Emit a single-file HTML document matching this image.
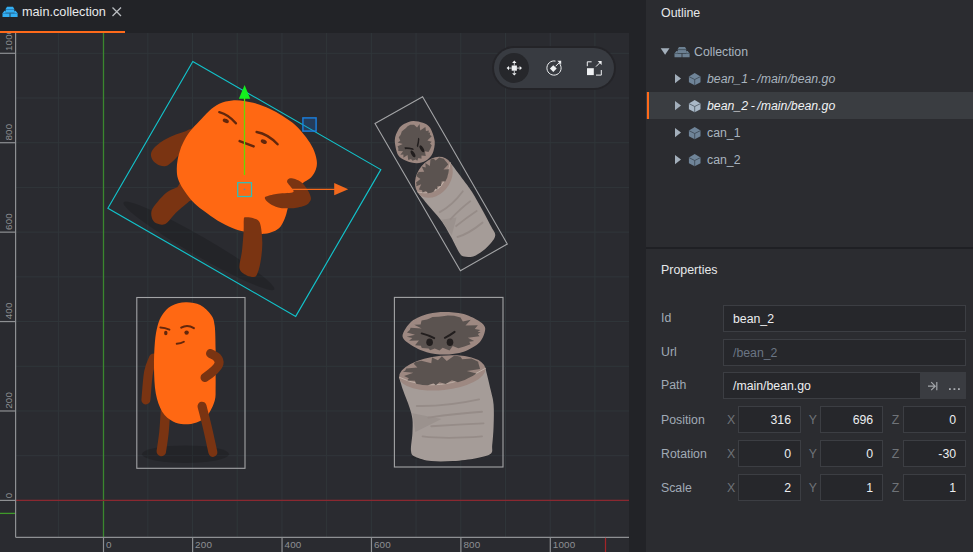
<!DOCTYPE html>
<html><head><meta charset="utf-8">
<style>
*{box-sizing:border-box;margin:0;padding:0}
html,body{width:973px;height:552px;overflow:hidden;background:#2b2c30;font-family:"Liberation Sans",sans-serif;}
.abs{position:absolute;white-space:nowrap}
#tabbar{left:0;top:0;width:646px;height:33px;background:#222327}
#strip{left:629px;top:0;width:17px;height:552px;background:#222327}
#tabline{left:0;top:31px;width:125px;height:2px;background:#ff6a1a}
.tabtxt{left:22px;top:4px;font-size:12.7px;color:#e8eaec;line-height:16px}
#panel{left:646px;top:0;width:327px;height:552px;background:#2b2c30}
#divider{left:646px;top:247px;width:327px;height:2px;background:#1f2024}
#sel{left:646px;top:92px;width:327px;height:27px;background:#3a3d41}
#selmark{left:647px;top:92px;width:2px;height:27px;background:#ff6a1a}
.h{font-size:12.4px;color:#e6e8ea;line-height:16px}
.row{font-size:12.3px;color:#a9b4bf;line-height:16px}
.it{font-style:italic;word-spacing:-0.8px}
.lbl{font-size:12.3px;color:#a0aab5;line-height:16px}
.fld{background:#26272b;border:1px solid #3c3e43}
.val{font-size:12.3px;color:#eceef0;line-height:16px}
.xyz{font-size:12.3px;color:#6f7378;line-height:16px}
.num{text-align:right;width:62.5px}
</style></head><body>
<div id="tabbar" class="abs"></div>
<div id="strip" class="abs"></div>
<div id="tabline" class="abs"></div>
<svg class="abs" style="left:0;top:0" width="22" height="22" viewBox="0 0 22 22">
  <path d="M7 6.8 L13 6.8 L14.2 8.8 L14.2 12.8 L5.8 12.8 L5.8 8.8 Z" fill="#33aef2"/>
  <rect x="5.8" y="9.1" width="8.4" height="0.8" fill="#2277b0"/>
  <path d="M4.4 10.8 L5.8 10.8 L5.8 13.2 L9.6 13.2 L9.6 17 L2.5 17 L2.5 13.3 Z" fill="#33aef2"/>
  <path d="M15.6 10.8 L14.2 10.8 L14.2 13.2 L10.4 13.2 L10.4 17 L17.6 17 L17.6 13.3 Z" fill="#33aef2"/>
  <rect x="2.5" y="13.1" width="15.1" height="0.6" fill="#2277b0"/>
</svg>
<div class="abs tabtxt">main.collection</div>
<svg class="abs" style="left:111px;top:6px" width="12" height="12" viewBox="0 0 12 12">
  <path d="M1.5 1.5 L10 10 M10 1.5 L1.5 10" stroke="#b9bcc0" stroke-width="1.3"/>
</svg>

<svg class="abs" style="left:0;top:0" width="629" height="552" viewBox="0 0 629 552"><defs><clipPath id="cc"><rect x="0" y="33" width="629" height="519"/></clipPath></defs><g clip-path="url(#cc)">
<rect x="0" y="33" width="629" height="519" fill="#2a2b30"/>
<line x1="58.39" y1="33" x2="58.39" y2="537.3" stroke="#30363a" stroke-width="1"/>
<line x1="103.50" y1="33" x2="103.50" y2="537.3" stroke="#30363a" stroke-width="1"/>
<line x1="147.81" y1="33" x2="147.81" y2="537.3" stroke="#30363a" stroke-width="1"/>
<line x1="192.52" y1="33" x2="192.52" y2="537.3" stroke="#30363a" stroke-width="1"/>
<line x1="237.23" y1="33" x2="237.23" y2="537.3" stroke="#30363a" stroke-width="1"/>
<line x1="281.94" y1="33" x2="281.94" y2="537.3" stroke="#30363a" stroke-width="1"/>
<line x1="326.65" y1="33" x2="326.65" y2="537.3" stroke="#30363a" stroke-width="1"/>
<line x1="371.36" y1="33" x2="371.36" y2="537.3" stroke="#30363a" stroke-width="1"/>
<line x1="416.07" y1="33" x2="416.07" y2="537.3" stroke="#30363a" stroke-width="1"/>
<line x1="460.78" y1="33" x2="460.78" y2="537.3" stroke="#30363a" stroke-width="1"/>
<line x1="505.49" y1="33" x2="505.49" y2="537.3" stroke="#30363a" stroke-width="1"/>
<line x1="550.20" y1="33" x2="550.20" y2="537.3" stroke="#30363a" stroke-width="1"/>
<line x1="594.91" y1="33" x2="594.91" y2="537.3" stroke="#30363a" stroke-width="1"/>
<line x1="15.6" y1="500.40" x2="629" y2="500.40" stroke="#30363a" stroke-width="1"/>
<line x1="15.6" y1="455.69" x2="629" y2="455.69" stroke="#30363a" stroke-width="1"/>
<line x1="15.6" y1="410.98" x2="629" y2="410.98" stroke="#30363a" stroke-width="1"/>
<line x1="15.6" y1="366.27" x2="629" y2="366.27" stroke="#30363a" stroke-width="1"/>
<line x1="15.6" y1="321.56" x2="629" y2="321.56" stroke="#30363a" stroke-width="1"/>
<line x1="15.6" y1="276.85" x2="629" y2="276.85" stroke="#30363a" stroke-width="1"/>
<line x1="15.6" y1="232.14" x2="629" y2="232.14" stroke="#30363a" stroke-width="1"/>
<line x1="15.6" y1="187.43" x2="629" y2="187.43" stroke="#30363a" stroke-width="1"/>
<line x1="15.6" y1="142.72" x2="629" y2="142.72" stroke="#30363a" stroke-width="1"/>
<line x1="15.6" y1="98.01" x2="629" y2="98.01" stroke="#30363a" stroke-width="1"/>
<line x1="15.6" y1="53.30" x2="629" y2="53.30" stroke="#30363a" stroke-width="1"/>
<line x1="103.5" y1="33" x2="103.5" y2="537.3" stroke="#3a872e" stroke-width="1.3"/>
<line x1="15.6" y1="500.4" x2="629" y2="500.4" stroke="#8a2830" stroke-width="1.25"/>
<line x1="15.6" y1="33" x2="15.6" y2="537.3" stroke="#8e9093" stroke-width="1.2"/>
<line x1="15.6" y1="537.3" x2="629" y2="537.3" stroke="#8e9093" stroke-width="1.2"/>
<line x1="0" y1="513.4" x2="15" y2="513.4" stroke="#3f9a2a" stroke-width="1.3"/>
<line x1="605.5" y1="537.8" x2="605.5" y2="552" stroke="#a22528" stroke-width="1.25"/>
<line x1="103.50" y1="537.3" x2="103.50" y2="552" stroke="#8e9093" stroke-width="1.2"/>
<text x="106.00" y="548.3" font-family="Liberation Sans" font-size="9.9" letter-spacing="0.15" fill="#8e9093">0</text>
<line x1="0" y1="500.40" x2="15.6" y2="500.40" stroke="#8e9093" stroke-width="1.2"/>
<text transform="translate(11.8 498.20) rotate(-90)" x="0" y="0" font-family="Liberation Sans" font-size="9.9" letter-spacing="0.15" fill="#8e9093">0</text>
<line x1="192.62" y1="537.3" x2="192.62" y2="552" stroke="#8e9093" stroke-width="1.2"/>
<text x="195.12" y="548.3" font-family="Liberation Sans" font-size="9.9" letter-spacing="0.15" fill="#8e9093">200</text>
<line x1="0" y1="410.98" x2="15.6" y2="410.98" stroke="#8e9093" stroke-width="1.2"/>
<text transform="translate(11.8 408.78) rotate(-90)" x="0" y="0" font-family="Liberation Sans" font-size="9.9" letter-spacing="0.15" fill="#8e9093">200</text>
<line x1="282.04" y1="537.3" x2="282.04" y2="552" stroke="#8e9093" stroke-width="1.2"/>
<text x="284.54" y="548.3" font-family="Liberation Sans" font-size="9.9" letter-spacing="0.15" fill="#8e9093">400</text>
<line x1="0" y1="321.56" x2="15.6" y2="321.56" stroke="#8e9093" stroke-width="1.2"/>
<text transform="translate(11.8 319.36) rotate(-90)" x="0" y="0" font-family="Liberation Sans" font-size="9.9" letter-spacing="0.15" fill="#8e9093">400</text>
<line x1="371.46" y1="537.3" x2="371.46" y2="552" stroke="#8e9093" stroke-width="1.2"/>
<text x="373.96" y="548.3" font-family="Liberation Sans" font-size="9.9" letter-spacing="0.15" fill="#8e9093">600</text>
<line x1="0" y1="232.14" x2="15.6" y2="232.14" stroke="#8e9093" stroke-width="1.2"/>
<text transform="translate(11.8 229.94) rotate(-90)" x="0" y="0" font-family="Liberation Sans" font-size="9.9" letter-spacing="0.15" fill="#8e9093">600</text>
<line x1="460.88" y1="537.3" x2="460.88" y2="552" stroke="#8e9093" stroke-width="1.2"/>
<text x="463.38" y="548.3" font-family="Liberation Sans" font-size="9.9" letter-spacing="0.15" fill="#8e9093">800</text>
<line x1="0" y1="142.72" x2="15.6" y2="142.72" stroke="#8e9093" stroke-width="1.2"/>
<text transform="translate(11.8 140.52) rotate(-90)" x="0" y="0" font-family="Liberation Sans" font-size="9.9" letter-spacing="0.15" fill="#8e9093">800</text>
<line x1="550.30" y1="537.3" x2="550.30" y2="552" stroke="#8e9093" stroke-width="1.2"/>
<text x="552.80" y="548.3" font-family="Liberation Sans" font-size="9.9" letter-spacing="0.15" fill="#8e9093">1000</text>
<line x1="0" y1="53.30" x2="15.6" y2="53.30" stroke="#8e9093" stroke-width="1.2"/>
<text transform="translate(11.8 51.10) rotate(-90)" x="0" y="0" font-family="Liberation Sans" font-size="9.9" letter-spacing="0.15" fill="#8e9093">1000</text>
<ellipse cx="185.5" cy="454.2" rx="43.5" ry="8.8" fill="#000" fill-opacity="0.16"/>
<path d="M153.50 358.00 C152.68 360.33 149.87 365.02 148.60 372.00 C147.33 378.98 146.35 395.25 145.90 399.90" stroke="#7a3412" stroke-width="9" fill="none" stroke-linecap="round"/>
<path d="M165.50 410.00 C165.25 413.67 164.70 425.08 164.00 432.00 C163.30 438.92 161.75 448.25 161.30 451.50" stroke="#7a3412" stroke-width="9.5" fill="none" stroke-linecap="round"/>
<path d="M185.70 302.20 C190.53 302.05 195.97 302.88 200.20 305.00 C204.43 307.12 208.68 311.43 211.10 314.90 C213.52 318.37 213.95 320.07 214.70 325.80 C215.45 331.53 215.45 341.93 215.60 349.30 C215.75 356.67 215.60 363.53 215.60 370.00 C215.60 376.47 215.75 382.97 215.60 388.10 C215.45 393.23 216.05 396.27 214.70 400.80 C213.35 405.33 210.52 411.68 207.50 415.30 C204.48 418.92 200.53 421.00 196.60 422.50 C192.67 424.00 187.83 424.45 183.90 424.30 C179.97 424.15 176.62 423.70 173.00 421.60 C169.38 419.50 165.07 416.37 162.20 411.70 C159.33 407.03 157.17 400.97 155.80 393.60 C154.43 386.23 154.15 376.08 154.00 367.50 C153.85 358.92 154.30 349.05 154.90 342.10 C155.50 335.15 156.38 330.33 157.60 325.80 C158.82 321.27 159.93 318.22 162.20 314.90 C164.47 311.58 167.28 308.02 171.20 305.90 C175.12 303.78 180.87 302.35 185.70 302.20Z" fill="#ff6813"/>
<path d="M202.00 406.20 C202.92 409.83 205.68 420.30 207.50 428.00 C209.32 435.70 212.00 448.33 212.90 452.40" stroke="#7a3412" stroke-width="9" fill="none" stroke-linecap="round"/>
<path d="M210.50 353.50 C211.58 354.17 215.58 355.83 217.00 357.50 C218.42 359.17 219.50 361.33 219.00 363.50 C218.50 365.67 216.33 368.17 214.00 370.50 C211.67 372.83 206.50 376.33 205.00 377.50" stroke="#7a3412" stroke-width="9" fill="none" stroke-linecap="round" stroke-linejoin="round"/>
<path d="M160.4 327.4 Q165 327.6 169.4 329.6" stroke="#63270c" stroke-width="2" fill="none" stroke-linecap="round"/>
<ellipse cx="165.8" cy="333" rx="1.7" ry="2.2" fill="#63270c"/>
<path d="M181.2 327.6 Q187.5 324 193.9 328.2" stroke="#63270c" stroke-width="2" fill="none" stroke-linecap="round"/>
<ellipse cx="186.6" cy="332.6" rx="2.2" ry="2.2" fill="#63270c"/>
<path d="M176.7 343.8 Q181 343.6 183.9 341.8" stroke="#63270c" stroke-width="1.9" fill="none" stroke-linecap="round"/>
<rect x="136.8" y="297.5" width="108.2" height="170.8" fill="none" stroke="#a3a4a6" stroke-width="1.1"/>
<ellipse cx="0" cy="0" rx="43.5" ry="9.6" fill="#000" fill-opacity="0.16" transform="translate(198.9 245.9) rotate(30) scale(2 1)"/>
<path d="M196.00 128.50 C194.33 126.25 186.33 131.08 182.00 132.50 C177.67 133.92 173.83 135.17 170.00 137.00 C166.17 138.83 161.92 141.33 159.00 143.50 C156.08 145.67 153.83 147.92 152.50 150.00 C151.17 152.08 150.72 154.00 151.00 156.00 C151.28 158.00 152.70 160.42 154.20 162.00 C155.70 163.58 158.03 164.83 160.00 165.50 C161.97 166.17 164.00 166.58 166.00 166.00 C168.00 165.42 169.83 163.83 172.00 162.00 C174.17 160.17 176.67 157.17 179.00 155.00 C181.33 152.83 183.83 150.50 186.00 149.00 C188.17 147.50 190.33 149.42 192.00 146.00 C193.67 142.58 197.67 130.75 196.00 128.50Z" fill="#7a3412"/>
<path d="M182.00 182.00 C179.50 180.22 179.45 185.62 177.00 187.30 C174.55 188.98 170.55 189.67 167.30 192.10 C164.05 194.53 160.13 198.75 157.50 201.90 C154.87 205.05 152.32 208.02 151.50 211.00 C150.68 213.98 151.68 217.70 152.60 219.80 C153.52 221.90 155.37 222.78 157.00 223.60 C158.63 224.42 160.68 224.88 162.40 224.70 C164.12 224.52 164.87 224.67 167.30 222.50 C169.73 220.33 173.48 215.13 177.00 211.70 C180.52 208.27 185.90 204.18 188.40 201.90 C190.90 199.62 193.07 201.32 192.00 198.00 C190.93 194.68 184.50 183.78 182.00 182.00Z" fill="#7a3412"/>
<path d="M232.30 100.50 C236.62 100.08 241.15 100.67 245.20 101.20 C249.25 101.73 252.53 102.43 256.60 103.70 C260.67 104.97 265.25 106.75 269.60 108.80 C273.95 110.85 278.35 113.23 282.70 116.00 C287.05 118.77 291.83 121.90 295.70 125.40 C299.57 128.90 303.00 133.13 305.90 137.00 C308.80 140.87 311.30 144.73 313.10 148.60 C314.90 152.47 316.22 156.80 316.70 160.20 C317.18 163.60 316.95 166.12 316.00 169.00 C315.05 171.88 313.28 175.08 311.00 177.50 C308.72 179.92 305.13 180.75 302.30 183.50 C299.47 186.25 296.30 190.25 294.00 194.00 C291.70 197.75 289.92 202.25 288.50 206.00 C287.08 209.75 286.82 213.08 285.50 216.50 C284.18 219.92 282.63 223.98 280.60 226.50 C278.57 229.02 275.97 230.38 273.30 231.60 C270.63 232.82 268.15 233.53 264.60 233.80 C261.05 234.07 255.45 233.57 252.00 233.20 C248.55 232.83 247.18 232.47 243.90 231.60 C240.62 230.73 236.65 229.82 232.30 228.00 C227.95 226.18 222.63 223.60 217.80 220.70 C212.97 217.80 207.65 213.98 203.30 210.60 C198.95 207.22 195.08 204.03 191.70 200.40 C188.32 196.77 185.28 192.42 183.00 188.80 C180.72 185.18 179.03 181.83 178.00 178.70 C176.97 175.57 176.87 173.12 176.80 170.00 C176.73 166.88 176.98 163.50 177.60 160.00 C178.22 156.50 179.35 152.33 180.50 149.00 C181.65 145.67 182.87 143.00 184.50 140.00 C186.13 137.00 187.88 134.08 190.30 131.00 C192.72 127.92 195.87 124.85 199.00 121.50 C202.13 118.15 205.72 113.87 209.10 110.90 C212.48 107.93 215.43 105.43 219.30 103.70 C223.17 101.97 227.98 100.92 232.30 100.50Z" fill="#ff6813"/>
<path d="M245.20 217.30 C246.80 217.00 250.95 217.25 253.40 218.20 C255.85 219.15 258.42 218.93 259.90 223.00 C261.38 227.07 262.20 236.10 262.30 242.60 C262.40 249.10 261.45 256.57 260.50 262.00 C259.55 267.43 258.07 272.72 256.60 275.20 C255.13 277.68 253.60 277.00 251.70 276.90 C249.80 276.80 247.23 276.10 245.20 274.60 C243.17 273.10 240.03 271.87 239.50 267.90 C238.97 263.93 241.32 256.92 242.00 250.80 C242.68 244.68 243.30 236.33 243.60 231.20 C243.90 226.07 243.53 222.32 243.80 220.00 C244.07 217.68 243.60 217.60 245.20 217.30Z" fill="#7a3412"/>
<path d="M265.40 196.80 C266.75 195.91 272.63 194.47 276.20 193.90 C279.77 193.33 289.97 193.07 292.20 192.50 C294.43 191.93 293.58 191.00 292.90 189.60 C292.22 188.20 287.58 183.48 287.10 182.00 C286.62 180.52 288.23 178.90 289.30 178.50 C290.37 178.10 293.37 178.40 295.10 179.00 C296.83 179.60 300.51 181.33 302.30 183.00 C304.09 184.67 307.34 189.37 308.50 191.50 C309.66 193.63 311.24 197.23 311.00 199.00 C310.76 200.77 308.82 203.60 306.70 204.80 C304.58 206.00 298.58 207.57 295.10 208.00 C291.62 208.43 283.69 208.40 280.60 208.00 C277.51 207.60 273.83 205.99 271.90 205.00 C269.97 204.01 266.97 201.69 266.10 200.60 C265.23 199.51 264.05 197.69 265.40 196.80Z" fill="#7a3412"/>
<path d="M219.3 112.1 Q228.5 114.5 235.9 123.3" stroke="#63270c" stroke-width="2.4" fill="none" stroke-linecap="round"/>
<ellipse cx="0" cy="0" rx="3.2" ry="2" fill="#63270c" transform="translate(225.8 120.8) rotate(25)"/>
<path d="M256.6 132 Q268 134 277.6 144.3" stroke="#63270c" stroke-width="2.4" fill="none" stroke-linecap="round"/>
<ellipse cx="0" cy="0" rx="3.2" ry="2" fill="#63270c" transform="translate(263.8 141.6) rotate(25)"/>
<path d="M239.6 141.1 L253.7 146.4" stroke="#63270c" stroke-width="2.4" fill="none" stroke-linecap="round"/>
<g transform="translate(448.7 382.2)"><path d="M-37 74 Q2 84 42 71" stroke="#1f2023" stroke-width="3" fill="none" opacity="0.35"/>
<path d="M-49.60 -5.00 C-48.95 -2.87 -47.43 2.77 -45.70 7.80 C-43.97 12.83 -40.77 20.37 -39.20 25.20 C-37.63 30.03 -36.78 32.45 -36.30 36.80 C-35.82 41.15 -36.07 45.98 -36.30 51.30 C-36.53 56.62 -38.18 64.83 -37.70 68.70 C-37.22 72.57 -36.78 72.80 -33.40 74.50 C-30.02 76.20 -23.68 78.17 -17.40 78.90 C-11.12 79.63 -3.18 79.38 4.30 78.90 C11.78 78.42 21.22 77.22 27.50 76.00 C33.78 74.78 39.33 73.78 42.00 71.60 C44.67 69.42 43.02 67.48 43.50 62.90 C43.98 58.32 44.67 50.87 44.90 44.10 C45.13 37.33 45.38 28.35 44.90 22.30 C44.42 16.25 43.37 13.88 42.00 7.80 C40.63 1.72 37.58 -10.53 36.70 -14.20 Z" fill="#a59c98"/>
<path d="M-36.3 31 L-7.3 36.8 L-33.4 49.9 Z" fill="#9b928e"/>
<path d="M-31.9 23.8 Q-2.9 24.5 30.4 17.2" stroke="#968c88" stroke-width="1.9" fill="none" stroke-linecap="round"/>
<path d="M-20.3 35.4 Q10 31 33.3 29.6" stroke="#968c88" stroke-width="1.9" fill="none" stroke-linecap="round"/>
<path d="M-17.4 44.1 Q10 42 34.8 41.2" stroke="#968c88" stroke-width="1.9" fill="none" stroke-linecap="round"/>
<path d="M-26.1 54.2 Q-2.9 57.1 33.3 54.2" stroke="#968c88" stroke-width="1.9" fill="none" stroke-linecap="round"/>
<ellipse cx="0" cy="0" rx="43.4" ry="17.2" fill="#9d8881" transform="translate(-6.4 -9.3) rotate(-6)"/>
<path d="M-49.5 -5 Q-10 14 37 -14" stroke="#c2b3aa" stroke-width="0.9" fill="none"/>
<path d="M31.39 -13.31 L18.14 -11.26 L27.72 -8.64 L24.44 -6.45 L19.29 -3.84 L16.04 -2.17 L9.16 0.02 L3.18 -1.90 L-3.03 1.69 L-9.26 0.13 L-12.93 3.13 L-15.07 1.14 L-20.72 3.10 L-26.30 2.81 L-32.65 1.43 L-33.77 -1.37 L-41.32 -1.76 L-39.90 -3.94 L-44.66 -6.27 L-35.32 -9.54 L-45.85 -10.41 L-43.45 -11.71 L-42.52 -13.74 L-31.31 -14.59 L-35.02 -18.42 L-33.23 -20.17 L-27.39 -21.45 L-17.43 -19.01 L-16.70 -24.73 L-10.75 -21.89 L-6.81 -26.04 L-1.95 -21.15 L5.42 -26.39 L8.57 -26.13 L11.76 -25.39 L13.54 -23.05 L22.72 -23.67 L26.53 -21.86 L29.48 -20.35 L29.79 -18.62 L30.61 -15.87Z" fill="#5b5350"/>
<path d="M-46.20 -46.50 C-46.05 -50.02 -40.93 -57.70 -37.00 -61.00 C-33.07 -64.30 -24.95 -67.11 -20.00 -68.50 C-15.05 -69.89 -9.10 -70.30 -4.00 -70.30 C1.10 -70.30 9.05 -69.75 14.00 -68.50 C18.95 -67.25 25.62 -64.17 29.00 -62.00 C32.38 -59.83 36.20 -57.30 36.50 -54.00 C36.80 -50.70 34.23 -43.52 31.00 -40.00 C27.77 -36.48 20.25 -32.36 15.00 -30.50 C9.75 -28.64 1.55 -27.68 -4.00 -27.60 C-9.55 -27.53 -16.90 -28.52 -22.00 -30.00 C-27.10 -31.48 -34.37 -35.02 -38.00 -37.50 C-41.63 -39.98 -46.35 -42.98 -46.20 -46.50Z" fill="#9d8881"/>
<path d="M31.94 -49.87 L29.08 -48.25 L30.90 -45.91 L19.09 -44.40 L25.42 -41.28 L20.55 -40.44 L21.86 -38.05 L15.63 -35.72 L9.59 -33.97 L4.07 -36.24 L0.83 -31.78 L-6.03 -34.49 L-9.22 -31.64 L-13.95 -33.79 L-18.61 -31.94 L-20.08 -33.72 L-26.92 -34.20 L-27.81 -36.49 L-33.62 -37.06 L-29.77 -41.77 L-39.64 -41.48 L-36.33 -44.30 L-42.03 -45.54 L-33.66 -47.34 L-41.82 -49.77 L-38.89 -52.23 L-38.13 -54.36 L-26.94 -53.81 L-34.50 -57.57 L-28.06 -57.71 L-27.15 -61.58 L-21.76 -62.67 L-19.23 -63.65 L-16.20 -65.12 L-10.25 -65.48 L-5.99 -65.91 L-0.95 -66.59 L5.33 -66.45 L11.77 -64.75 L14.17 -60.76 L22.07 -62.56 L16.80 -56.78 L29.14 -57.02 L26.04 -53.25 L31.74 -52.30 L28.88 -50.56Z" fill="#5b5350"/>
<path d="M-27 -48.8 Q-20 -47 -14.5 -44.1" stroke="#221e1e" stroke-width="2" fill="none" stroke-linecap="round"/>
<ellipse cx="-19.1" cy="-40" rx="3.3" ry="3.8" fill="#221e1e"/>
<path d="M-3.8 -44.4 Q1.5 -47 5.9 -50.3" stroke="#221e1e" stroke-width="2" fill="none" stroke-linecap="round"/>
<ellipse cx="1.3" cy="-40" rx="3.3" ry="3.8" fill="#221e1e"/></g>
<rect x="394.4" y="297.4" width="108.6" height="169.6" fill="none" stroke="#a3a4a6" stroke-width="1.1"/>
<g transform="translate(441.3 183.75) rotate(-30) scale(0.5 1)"><path d="M-37 74 Q2 84 42 71" stroke="#1f2023" stroke-width="3" fill="none" opacity="0.35"/>
<path d="M-49.60 -5.00 C-48.95 -2.87 -47.43 2.77 -45.70 7.80 C-43.97 12.83 -40.77 20.37 -39.20 25.20 C-37.63 30.03 -36.78 32.45 -36.30 36.80 C-35.82 41.15 -36.07 45.98 -36.30 51.30 C-36.53 56.62 -38.18 64.83 -37.70 68.70 C-37.22 72.57 -36.78 72.80 -33.40 74.50 C-30.02 76.20 -23.68 78.17 -17.40 78.90 C-11.12 79.63 -3.18 79.38 4.30 78.90 C11.78 78.42 21.22 77.22 27.50 76.00 C33.78 74.78 39.33 73.78 42.00 71.60 C44.67 69.42 43.02 67.48 43.50 62.90 C43.98 58.32 44.67 50.87 44.90 44.10 C45.13 37.33 45.38 28.35 44.90 22.30 C44.42 16.25 43.37 13.88 42.00 7.80 C40.63 1.72 37.58 -10.53 36.70 -14.20 Z" fill="#a59c98"/>
<path d="M-36.3 31 L-7.3 36.8 L-33.4 49.9 Z" fill="#9b928e"/>
<path d="M-31.9 23.8 Q-2.9 24.5 30.4 17.2" stroke="#968c88" stroke-width="1.9" fill="none" stroke-linecap="round"/>
<path d="M-20.3 35.4 Q10 31 33.3 29.6" stroke="#968c88" stroke-width="1.9" fill="none" stroke-linecap="round"/>
<path d="M-17.4 44.1 Q10 42 34.8 41.2" stroke="#968c88" stroke-width="1.9" fill="none" stroke-linecap="round"/>
<path d="M-26.1 54.2 Q-2.9 57.1 33.3 54.2" stroke="#968c88" stroke-width="1.9" fill="none" stroke-linecap="round"/>
<ellipse cx="0" cy="0" rx="43.4" ry="17.2" fill="#9d8881" transform="translate(-6.4 -9.3) rotate(-6)"/>
<path d="M-49.5 -5 Q-10 14 37 -14" stroke="#c2b3aa" stroke-width="0.9" fill="none"/>
<path d="M31.39 -13.31 L18.14 -11.26 L27.72 -8.64 L24.44 -6.45 L19.29 -3.84 L16.04 -2.17 L9.16 0.02 L3.18 -1.90 L-3.03 1.69 L-9.26 0.13 L-12.93 3.13 L-15.07 1.14 L-20.72 3.10 L-26.30 2.81 L-32.65 1.43 L-33.77 -1.37 L-41.32 -1.76 L-39.90 -3.94 L-44.66 -6.27 L-35.32 -9.54 L-45.85 -10.41 L-43.45 -11.71 L-42.52 -13.74 L-31.31 -14.59 L-35.02 -18.42 L-33.23 -20.17 L-27.39 -21.45 L-17.43 -19.01 L-16.70 -24.73 L-10.75 -21.89 L-6.81 -26.04 L-1.95 -21.15 L5.42 -26.39 L8.57 -26.13 L11.76 -25.39 L13.54 -23.05 L22.72 -23.67 L26.53 -21.86 L29.48 -20.35 L29.79 -18.62 L30.61 -15.87Z" fill="#5b5350"/>
<path d="M-46.20 -46.50 C-46.05 -50.02 -40.93 -57.70 -37.00 -61.00 C-33.07 -64.30 -24.95 -67.11 -20.00 -68.50 C-15.05 -69.89 -9.10 -70.30 -4.00 -70.30 C1.10 -70.30 9.05 -69.75 14.00 -68.50 C18.95 -67.25 25.62 -64.17 29.00 -62.00 C32.38 -59.83 36.20 -57.30 36.50 -54.00 C36.80 -50.70 34.23 -43.52 31.00 -40.00 C27.77 -36.48 20.25 -32.36 15.00 -30.50 C9.75 -28.64 1.55 -27.68 -4.00 -27.60 C-9.55 -27.53 -16.90 -28.52 -22.00 -30.00 C-27.10 -31.48 -34.37 -35.02 -38.00 -37.50 C-41.63 -39.98 -46.35 -42.98 -46.20 -46.50Z" fill="#9d8881"/>
<path d="M31.94 -49.87 L29.08 -48.25 L30.90 -45.91 L19.09 -44.40 L25.42 -41.28 L20.55 -40.44 L21.86 -38.05 L15.63 -35.72 L9.59 -33.97 L4.07 -36.24 L0.83 -31.78 L-6.03 -34.49 L-9.22 -31.64 L-13.95 -33.79 L-18.61 -31.94 L-20.08 -33.72 L-26.92 -34.20 L-27.81 -36.49 L-33.62 -37.06 L-29.77 -41.77 L-39.64 -41.48 L-36.33 -44.30 L-42.03 -45.54 L-33.66 -47.34 L-41.82 -49.77 L-38.89 -52.23 L-38.13 -54.36 L-26.94 -53.81 L-34.50 -57.57 L-28.06 -57.71 L-27.15 -61.58 L-21.76 -62.67 L-19.23 -63.65 L-16.20 -65.12 L-10.25 -65.48 L-5.99 -65.91 L-0.95 -66.59 L5.33 -66.45 L11.77 -64.75 L14.17 -60.76 L22.07 -62.56 L16.80 -56.78 L29.14 -57.02 L26.04 -53.25 L31.74 -52.30 L28.88 -50.56Z" fill="#5b5350"/>
<path d="M-27 -48.8 Q-20 -47 -14.5 -44.1" stroke="#221e1e" stroke-width="2" fill="none" stroke-linecap="round"/>
<ellipse cx="-19.1" cy="-40" rx="3.3" ry="3.8" fill="#221e1e"/>
<path d="M-3.8 -44.4 Q1.5 -47 5.9 -50.3" stroke="#221e1e" stroke-width="2" fill="none" stroke-linecap="round"/>
<ellipse cx="1.3" cy="-40" rx="3.3" ry="3.8" fill="#221e1e"/></g>
<polygon points="422.6,96.7 507.3,244 460.4,270.8 375,123.5" fill="none" stroke="#a3a4a6" stroke-width="1.1"/>
<polygon points="192.8,61.45 380.8,169.6 295.7,316.4 107.9,208.3" fill="none" stroke="#12c2ca" stroke-width="1.15"/>
<line x1="244.5" y1="98" x2="244.5" y2="175" stroke="#6ad800" stroke-width="1.3"/>
<polygon points="244.6,85 238.9,98.7 250.2,98.7" fill="#14f01e"/>
<line x1="291" y1="189.3" x2="335" y2="189.3" stroke="#f5691a" stroke-width="1.3"/>
<polygon points="334.2,183 348.2,189.2 334.2,195.3" fill="#f2691d"/>
<rect x="237.7" y="182.7" width="13.8" height="13.8" fill="none" stroke="#2cc0bd" stroke-width="1.25"/>
<circle cx="244.5" cy="189.4" r="0.8" fill="#6a8a90"/>
<rect x="302.9" y="117.9" width="13.2" height="13.2" fill="#1a68c8" fill-opacity="0.28" stroke="#1b80e0" stroke-width="1.4"/>
<rect x="492" y="46" width="124" height="44" rx="22" fill="#232428" opacity="0.9"/>
<rect x="494" y="48" width="120" height="40" rx="20" fill="#383b41"/>
<circle cx="514" cy="68" r="15" fill="#26272b"/>
<g fill="#eef0f2"><rect x="511.7" y="65.5" width="5.2" height="5.2"/><path d="M514.3 60.6 L516.5 63 L512.1 63Z M514.3 75.6 L516.5 73.2 L512.1 73.2Z M506.6 68.1 L509 65.9 L509 70.3Z M522 68.1 L519.6 65.9 L519.6 70.3Z"/></g>
<g stroke="#eef0f2" stroke-width="0.8"><line x1="514.3" y1="62.8" x2="514.3" y2="65.5"/><line x1="514.3" y1="70.7" x2="514.3" y2="73.4"/><line x1="508.8" y1="68.1" x2="511.7" y2="68.1"/><line x1="516.9" y1="68.1" x2="519.8" y2="68.1"/></g>
<path d="M559.2 63.2 A7.1 7.1 0 1 1 555.5 61.1" stroke="#eef0f2" stroke-width="1" fill="none"/>
<rect x="-2.4" y="-2.4" width="4.8" height="4.8" fill="#eef0f2" transform="translate(553.3 68.6) rotate(45)"/>
<path d="M555.6 66.3 L559.8 62.1" stroke="#eef0f2" stroke-width="1"/><path d="M561.2 60.7 L561.2 64.6 L557.3 60.7Z" fill="#eef0f2"/>
<rect x="587" y="68.2" width="6.8" height="6.9" fill="#eef0f2"/>
<path d="M587.3 66.2 L587.3 61.8 L591.6 61.8 M601.3 70 L601.3 75.1 L596 75.1" stroke="#eef0f2" stroke-width="1" fill="none"/>
<path d="M596 66.6 L600.3 62.3" stroke="#eef0f2" stroke-width="1"/><path d="M601.6 61 L601.6 64.9 L597.7 61Z" fill="#eef0f2"/>
</g>
</svg>

<div id="panel" class="abs"></div>
<div id="divider" class="abs"></div>
<div id="sel" class="abs"></div>
<div id="selmark" class="abs"></div>

<div class="abs h" style="left:661px;top:5px">Outline</div>
<!-- tree -->
<svg class="abs" style="left:646px;top:0" width="327" height="247" viewBox="646 0 327 247">
  <path d="M660.7 48.2 L669.5 48.2 L665.1 54.8 Z" fill="#a3afbb"/>
  <g fill="#6c8092">
  <path d="M679 47 L685 47 L686.2 49 L686.2 53 L677.8 53 L677.8 49 Z"/>
  <path d="M676.4 51 L677.8 51 L677.8 53.4 L681.6 53.4 L681.6 57.2 L674.5 57.2 L674.5 53.5 Z"/>
  <path d="M687.6 51 L686.2 51 L686.2 53.4 L682.4 53.4 L682.4 57.2 L689.6 57.2 L689.6 53.5 Z"/>
</g>
<g fill="#3c4a56"><rect x="677.8" y="49.3" width="8.4" height="0.8"/><rect x="674.5" y="53.3" width="15.1" height="0.6"/></g><path d="M694.7 72.9 L700.5 76.60000000000001 L700.5 82.2 L694.7 85.30000000000001 L688.9 82.2 L688.9 76.60000000000001 Z" fill="#6f8498"/>
<path d="M688.9 76.60000000000001 L694.7 79.5 L700.5 76.60000000000001 M694.7 79.5 L694.7 85.30000000000001" stroke="#3a4550" stroke-width="0.8" fill="none"/>
<path d="M694.7 99.9 L700.5 103.60000000000001 L700.5 109.2 L694.7 112.30000000000001 L688.9 109.2 L688.9 103.60000000000001 Z" fill="#a9b8c7"/>
<path d="M688.9 103.60000000000001 L694.7 106.5 L700.5 103.60000000000001 M694.7 106.5 L694.7 112.30000000000001" stroke="#4a5560" stroke-width="0.8" fill="none"/>
<path d="M694.7 126.9 L700.5 130.6 L700.5 136.20000000000002 L694.7 139.3 L688.9 136.20000000000002 L688.9 130.6 Z" fill="#6f8498"/>
<path d="M688.9 130.6 L694.7 133.5 L700.5 130.6 M694.7 133.5 L694.7 139.3" stroke="#3a4550" stroke-width="0.8" fill="none"/>
<path d="M694.7 153.9 L700.5 157.6 L700.5 163.20000000000002 L694.7 166.3 L688.9 163.20000000000002 L688.9 157.6 Z" fill="#6f8498"/>
<path d="M688.9 157.6 L694.7 160.5 L700.5 157.6 M694.7 160.5 L694.7 166.3" stroke="#3a4550" stroke-width="0.8" fill="none"/>

  <g id="tri" fill="#a3afbb">
    <path d="M675 74 L681 78.6 L675 83.2 Z"/>
    <path d="M675 101 L681 105.6 L675 110.2 Z"/>
    <path d="M675 128 L681 132.6 L675 137.2 Z"/>
    <path d="M675 155 L681 159.6 L675 164.2 Z"/>
  </g>
</svg>
<div class="abs row" style="left:694px;top:44px">Collection</div>
<div class="abs row it" style="left:707px;top:71px">bean_1 - /main/bean.go</div>
<div class="abs row it" style="left:707px;top:98px;color:#f0f2f4">bean_2 - /main/bean.go</div>
<div class="abs row" style="left:707px;top:125px">can_1</div>
<div class="abs row" style="left:707px;top:152px">can_2</div>

<div class="abs h" style="left:661px;top:262px">Properties</div>
<div class="abs lbl" style="left:661px;top:310px">Id</div>
<div class="abs lbl" style="left:661px;top:344px">Url</div>
<div class="abs lbl" style="left:661px;top:377px">Path</div>
<div class="abs lbl" style="left:661px;top:412px">Position</div>
<div class="abs lbl" style="left:661px;top:446px">Rotation</div>
<div class="abs lbl" style="left:661px;top:480px">Scale</div>

<div class="abs fld" style="left:723px;top:305px;width:243px;height:27px"></div>
<div class="abs val" style="left:733px;top:311px">bean_2</div>
<div class="abs fld" style="left:723px;top:339px;width:243px;height:27px"></div>
<div class="abs val" style="left:733px;top:345px;color:#6b7584">/bean_2</div>
<div class="abs fld" style="left:723px;top:372px;width:243px;height:27px"></div>
<div class="abs" style="left:920px;top:372px;width:46px;height:27px;background:#3a3c41"></div>
<svg class="abs" style="left:920px;top:372px" width="46" height="27" viewBox="920 372 46 27">
<path d="M928 386.2 L935 386.2 M931.2 382.2 L935.2 386.2 L931.2 390.2 M936.8 382 L936.8 390.3" stroke="#a3a6aa" stroke-width="1.2" fill="none"/>
<rect x="949" y="388.2" width="1.8" height="1.8" fill="#a8abb0"/><rect x="953.5" y="388.2" width="1.8" height="1.8" fill="#a8abb0"/><rect x="958" y="388.2" width="1.8" height="1.8" fill="#a8abb0"/>
</svg>
<div class="abs val" style="left:733px;top:378px">/main/bean.go</div>

<div class="abs xyz" style="left:727px;top:412px">X</div>
<div class="abs fld" style="left:738px;top:406px;width:63px;height:27px"></div>
<div class="abs val" style="left:738px;top:412px;width:53px;text-align:right">316</div>
<div class="abs xyz" style="left:808.8px;top:412px">Y</div>
<div class="abs fld" style="left:820.2px;top:406px;width:63px;height:27px"></div>
<div class="abs val" style="left:820.2px;top:412px;width:53px;text-align:right">696</div>
<div class="abs xyz" style="left:891.7px;top:412px">Z</div>
<div class="abs fld" style="left:903.1px;top:406px;width:63px;height:27px"></div>
<div class="abs val" style="left:903.1px;top:412px;width:53px;text-align:right">0</div>
<div class="abs xyz" style="left:727px;top:446px">X</div>
<div class="abs fld" style="left:738px;top:440px;width:63px;height:27px"></div>
<div class="abs val" style="left:738px;top:446px;width:53px;text-align:right">0</div>
<div class="abs xyz" style="left:808.8px;top:446px">Y</div>
<div class="abs fld" style="left:820.2px;top:440px;width:63px;height:27px"></div>
<div class="abs val" style="left:820.2px;top:446px;width:53px;text-align:right">0</div>
<div class="abs xyz" style="left:891.7px;top:446px">Z</div>
<div class="abs fld" style="left:903.1px;top:440px;width:63px;height:27px"></div>
<div class="abs val" style="left:903.1px;top:446px;width:53px;text-align:right">-30</div>
<div class="abs xyz" style="left:727px;top:480px">X</div>
<div class="abs fld" style="left:738px;top:474px;width:63px;height:27px"></div>
<div class="abs val" style="left:738px;top:480px;width:53px;text-align:right">2</div>
<div class="abs xyz" style="left:808.8px;top:480px">Y</div>
<div class="abs fld" style="left:820.2px;top:474px;width:63px;height:27px"></div>
<div class="abs val" style="left:820.2px;top:480px;width:53px;text-align:right">1</div>
<div class="abs xyz" style="left:891.7px;top:480px">Z</div>
<div class="abs fld" style="left:903.1px;top:474px;width:63px;height:27px"></div>
<div class="abs val" style="left:903.1px;top:480px;width:53px;text-align:right">1</div>
</body></html>
